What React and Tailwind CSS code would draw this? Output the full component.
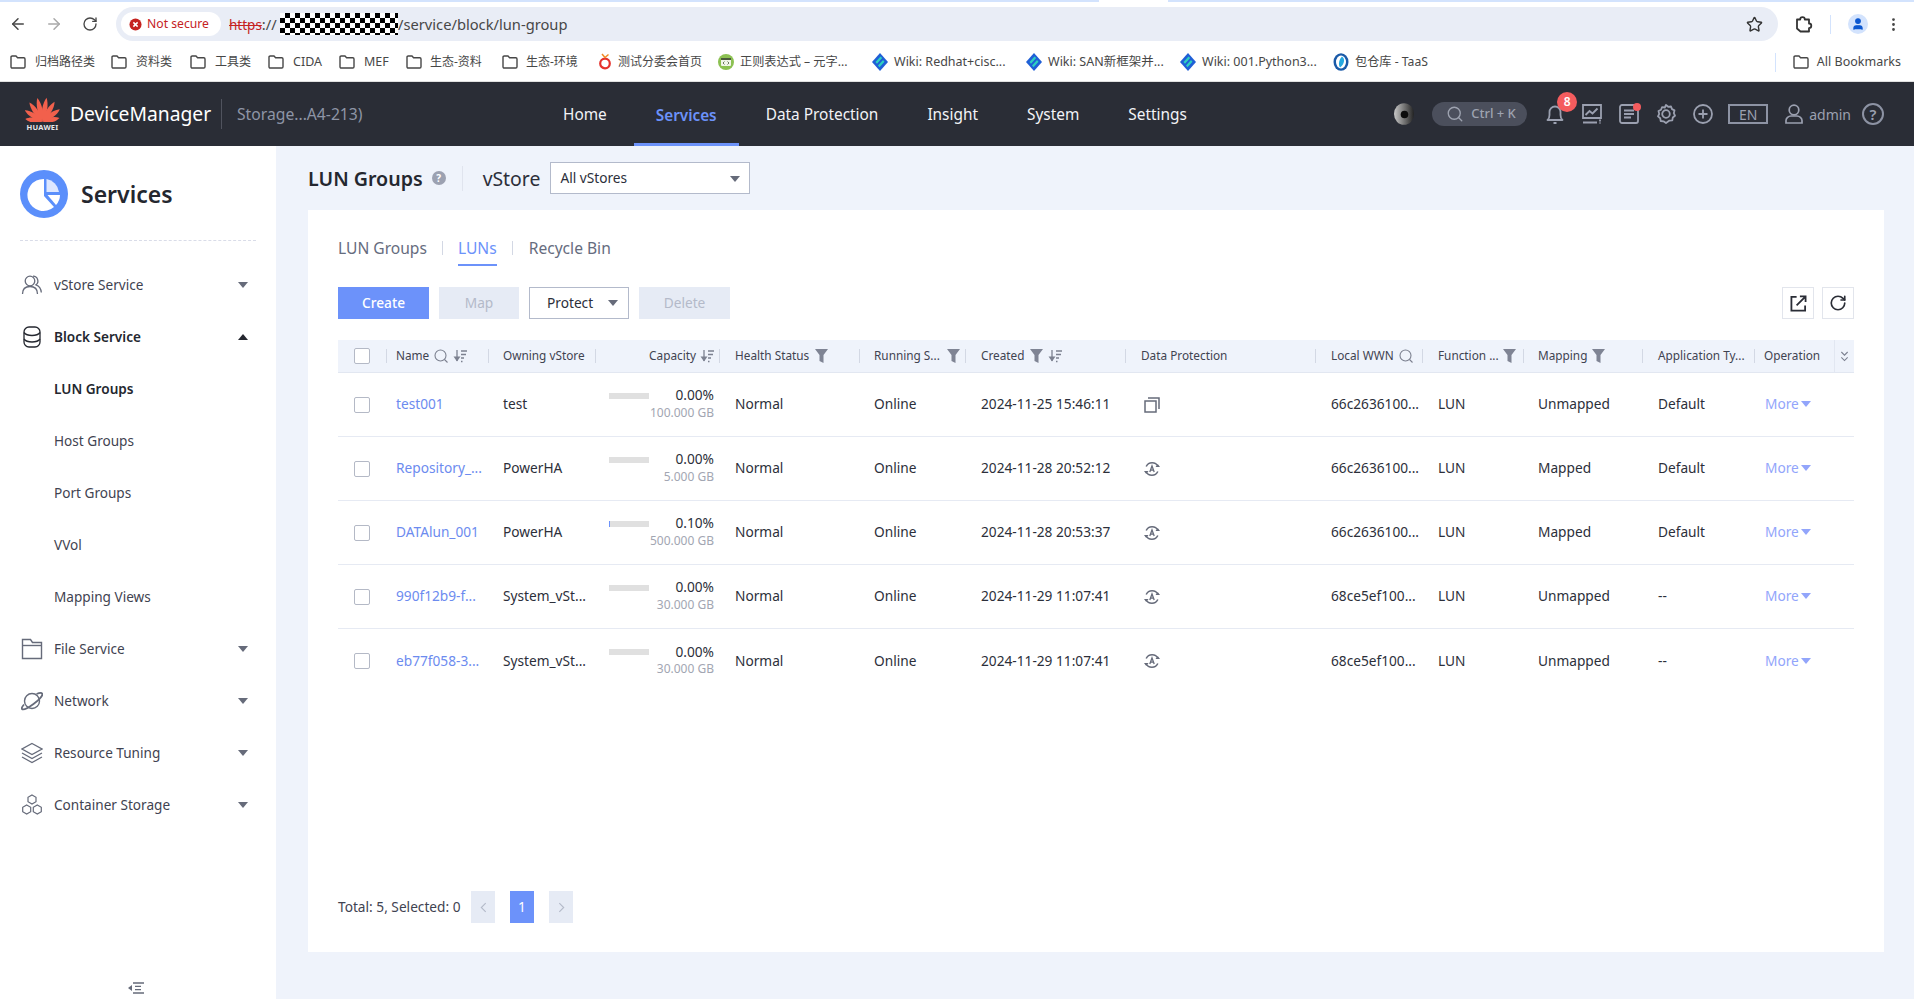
import React from "react";
import { ArrowLeft, ArrowRight, RotateCw, Star, User, EllipsisVertical, Search } from "lucide-react";

const GRID = "grid grid-cols-[48px_102px_107px_124px_140px_106px_160px_190px_107px_101px_119px_112px_80px_20px]";

function Caret({ up, className }) {
  return (
    <svg viewBox="0 0 10 6" className={className}>
      <polygon points={up ? "0,6 10,6 5,0" : "0,0 10,0 5,6"} fill="currentColor" />
    </svg>
  );
}

function Folder({ className = "w-4 h-[14px] text-[#474747]" }) {
  return (
    <svg viewBox="0 0 16 14" className={className} fill="none" stroke="currentColor" strokeWidth="1.4">
      <path d="M1 2.2C1 1.5 1.5 1 2.2 1H6l1.6 1.8h6.2c.7 0 1.2.5 1.2 1.2v7.8c0 .7-.5 1.2-1.2 1.2H2.2C1.5 13 1 12.500 1 11.800Z" />
    </svg>
  );
}

function RedIcon() {
  return (
    <svg viewBox="0 0 14 18" className="w-[14px] h-[18px]">
      <circle cx="7" cy="10.500" r="4.800" fill="none" stroke="#e5322d" strokeWidth="2.200" />
      <path d="M4 1l3 3.500L10.500 1.500" fill="none" stroke="#f08a24" strokeWidth="1.500" />
    </svg>
  );
}
function GreenIcon() {
  return (
    <svg viewBox="0 0 16 16" className="w-4 h-4">
      <circle cx="8" cy="8" r="8" fill="#8cc152" />
      <rect x="3" y="4" width="10" height="8" rx="1" fill="#f1f5ea" />
      <rect x="3" y="4" width="10" height="2" fill="#4b5a3c" />
      <path d="M6.500 7.500L5 9l1.500 1.500M9.500 7.500L11 9l-1.500 1.500" fill="none" stroke="#4b5a3c" strokeWidth=".8" />
    </svg>
  );
}
function WikiIcon() {
  return (
    <svg viewBox="0 0 16 18" className="w-4 h-[18px]">
      <path d="M8 0L16 9L8 18L0 9Z" fill="#1f5fd6" />
      <path d="M8.500 3.500L3.500 9l1.500 1.800L10.200 5ZM11 7L6 12.500l1.500 1.800L12.500 8.800Z" fill="#2fd0c0" />
    </svg>
  );
}
function TaasIcon() {
  return (
    <svg viewBox="0 0 16 18" className="w-4 h-[18px]">
      <ellipse cx="8" cy="9" rx="7.500" ry="8.800" fill="#1a5aa8" />
      <ellipse cx="8" cy="9" rx="5" ry="6.500" fill="#fff" />
      <path d="M9 3.500c3 2 3 7 -2 11c-2 -3 -1 -8 2 -11Z" fill="#25a9e0" />
    </svg>
  );
}

const bookmarks = [
  { w: "w-[101px] text-[12px]", gap: "gap-[9px]", icon: <Folder />, t: "归档路径类" },
  { w: "w-[79px] text-[12px]", gap: "gap-[9px]", icon: <Folder />, t: "资料类" },
  { w: "w-[78px] text-[12px]", gap: "gap-[9px]", icon: <Folder />, t: "工具类" },
  { w: "w-[71px]", gap: "gap-[9px]", icon: <Folder />, t: "CIDA" },
  { w: "w-[67px]", gap: "gap-[9px]", icon: <Folder />, t: "MEF" },
  { w: "w-[96px] text-[12px]", gap: "gap-[8px]", icon: <Folder />, t: "生态-资料" },
  { w: "w-[96px] text-[12px]", gap: "gap-[8px]", icon: <Folder />, t: "生态-环境" },
  { w: "w-[120px] text-[12px]", gap: "gap-[6px]", icon: <RedIcon />, t: "测试分委会首页" },
  { w: "w-[154px] text-[12.200px]", gap: "gap-[6px]", icon: <GreenIcon />, t: "正则表达式 – 元字..." },
  { w: "w-[154px]", gap: "gap-[6px]", icon: <WikiIcon />, t: "Wiki: Redhat+cisc..." },
  { w: "w-[154px]", gap: "gap-[6px]", icon: <WikiIcon />, t: "Wiki: SAN新框架并..." },
  { w: "w-[153px]", gap: "gap-[6px]", icon: <WikiIcon />, t: "Wiki: 001.Python3..." },
  { w: "w-[110px] text-[12.200px]", gap: "gap-[6px]", icon: <TaasIcon />, t: "包仓库 - TaaS" },
];

function BrowserChrome() {
  return (
    <div className="bg-white shrink-0">
      <div className="flex h-[2px]">
        <div className="w-[1099px] bg-[#d3e3fd]" />
        <div className="w-[69px] bg-white" />
        <div className="flex-1 bg-[#d3e3fd]" />
      </div>
      <div className="flex items-center pt-[5px] h-[39px]">
        <div className="w-9 flex justify-center"><ArrowLeft className="w-[18px] h-[18px] text-[#474747]" strokeWidth={2} /></div>
        <div className="w-9 flex justify-center"><ArrowRight className="w-[18px] h-[18px] text-[#a9a9a9]" strokeWidth={2} /></div>
        <div className="w-9 flex justify-center"><RotateCw className="w-4 h-4 text-[#474747]" strokeWidth={2} /></div>
        <div className="ml-2 flex-1 h-[34px] rounded-full bg-[#e9edf6] flex items-center pl-[5px] pr-[15px]">
          <div className="h-6 w-[100px] bg-white rounded-full flex items-center pl-[8px] gap-[5px] text-[12.200px] text-[#c5221f]">
            <svg viewBox="0 0 14 14" className="w-[13px] h-[13px] shrink-0">
              <circle cx="7" cy="7" r="6.500" fill="#c5221f" />
              <path d="M4.700 4.700l4.600 4.600M9.300 4.700l-4.600 4.600" stroke="#fff" strokeWidth="1.600" />
            </svg>
            <span className="leading-none">Not secure</span>
          </div>
          <div className="flex items-center ml-2 text-[14.700px] text-[#474747]">
            <span className="w-[51px] whitespace-nowrap">
              <span className="text-[13.500px] text-[#c5221f] line-through">https</span>://
            </span>
            <span className="inline-block w-[118px] h-[22px] bg-[repeating-conic-gradient(#000_0_25%,#fff_0_50%)] bg-[length:10px_10px]" />
            <span>/service/block/lun-group</span>
          </div>
          <Star className="ml-auto w-[17px] h-[17px] text-[#333]" strokeWidth={2} />
        </div>
        <div className="w-[136px] flex items-center pl-[17px]">
          <svg viewBox="0 0 18 18" className="w-[18px] h-[18px] text-[#333] shrink-0" fill="none" stroke="currentColor" strokeWidth="1.800">
            <path d="M2 4.500h3.200a2.300 2.300 0 0 1 4.600 0H14v4a2.300 2.300 0 0 1 0 4.600V16.500H5.500L2 13.500Z" strokeLinejoin="round" />
          </svg>
          <div className="ml-[17px] w-px h-[19px] bg-[#d3e3fd]" />
          <div className="ml-[17px] w-5 h-5 rounded-full bg-[#d3e3fd] flex items-center justify-center">
            <User className="w-[14px] h-[14px] text-[#0b57d0] fill-[#0b57d0]" />
          </div>
          <EllipsisVertical className="ml-[17px] w-[17px] h-[17px] text-[#474747]" strokeWidth={2} />
        </div>
      </div>
      <div className="h-[41px] flex items-center pl-[10px] pt-[2px] border-b border-[#e0e0e0] text-[12.500px] text-[#474747]">
        {bookmarks.map((b) => (
          <div key={b.t} className={`${b.w} ${b.gap} shrink-0 flex items-center whitespace-nowrap`}>
            <span className="shrink-0 flex">{b.icon}</span>
            <span>{b.t}</span>
          </div>
        ))}
        <div className="ml-auto flex items-center">
          <div className="w-px h-[19px] bg-[#d3e3fd] mr-[17px]" />
          <Folder />
          <span className="ml-2 mr-[13px] whitespace-nowrap">All Bookmarks</span>
        </div>
      </div>
    </div>
  );
}

function HuaweiLogo() {
  const petals = [
    [-11, 25], [11, 25], [-33, 24], [33, 24], [-56, 22], [56, 22], [-80, 18], [80, 18],
  ];
  return (
    <svg viewBox="0 0 36 27" className="w-[35px] h-[26px]">
      <defs>
        <linearGradient id="hw" gradientUnits="userSpaceOnUse" x1="18" y1="0" x2="18" y2="27">
          <stop offset="0" stopColor="#f2604c" />
          <stop offset=".4" stopColor="#e82a20" />
          <stop offset="1" stopColor="#9c0c10" />
        </linearGradient>
      </defs>
      {petals.map(([a, l]) => (
        <path
          key={a}
          transform={`translate(18 26.500) rotate(${a})`}
          d={`M0 0C-3.800 ${-l * 0.35} -3.600 ${-l * 0.75} -0.600 ${-l}C3 ${-l * 0.75} 3.400 ${-l * 0.35} 0 0Z`}
          fill="url(#hw)"
        />
      ))}
    </svg>
  );
}

const navs = ["Home", "Services", "Data Protection", "Insight", "System", "Settings"];

function TopBar() {
  const ic = "text-[#9ba0b0]";
  return (
    <div className="h-16 bg-[#2a2d36] flex items-center shrink-0 text-white">
      <div className="ml-[25px] flex flex-col items-center w-[35px]">
        <HuaweiLogo />
        <span className="text-[7.500px] font-bold leading-[9px] mt-[1px] text-[#e8e8ea] tracking-[0.2px]">HUAWEI</span>
      </div>
      <span className="ml-[10px] w-[141px] text-[19.300px] leading-none whitespace-nowrap">DeviceManager</span>
      <div className="ml-[10px] w-px h-[30px] bg-[#50535e]" />
      <span className="ml-[15px] w-[124px] pt-[2px] text-[15.700px] text-[#8e95a6] whitespace-nowrap">Storage...A4-213)</span>
      <div className="ml-[180px] flex h-full gap-[5px]">
        {navs.map((n) => (
          <div
            key={n}
            className={
              n === "Services"
                ? "px-[22px] h-full flex items-center text-[15.300px] font-semibold text-[#6c92fa] border-b-[3px] border-[#6c92fa] pt-[5px]"
                : "px-[22px] h-full flex items-center text-[15.400px] text-[#f2f3f6] whitespace-nowrap pt-[2px]"
            }
          >
            {n}
          </div>
        ))}
      </div>
      <div className="ml-auto flex items-center pr-[30px]">
        <svg viewBox="0 0 22 22" className="w-[22px] h-[22px]">
          <defs>
            <linearGradient id="eye" x1="0" y1="0" x2="1" y2="0">
              <stop offset="0" stopColor="#c8c8c8" />
              <stop offset=".6" stopColor="#666" />
              <stop offset="1" stopColor="#222" />
            </linearGradient>
          </defs>
          <ellipse cx="11" cy="11" rx="10" ry="10.800" fill="url(#eye)" />
          <circle cx="11.500" cy="11.500" r="3.800" fill="#0c0c0c" />
        </svg>
        <div className="ml-[17px] w-[95px] h-6 rounded-full bg-[#4b4f5c] flex items-center pl-[14px] gap-[7px] text-[13px] font-medium text-[#9ea3b0]">
          <Search className="w-[18px] h-[18px] text-[#9ea3b0]" strokeWidth={1.800} />
          <span className="whitespace-nowrap">Ctrl + K</span>
        </div>
        <div className="relative ml-[18px] w-5 h-5">
          <svg viewBox="0 0 20 20" className={`w-5 h-5 ${ic}`} fill="none" stroke="currentColor" strokeWidth="1.800">
            <path d="M2.500 16c1.500-1.200 2-3 2-5V8a5.500 5.500 0 0 1 11 0v3c0 2 .5 3.800 2 5Z" strokeLinejoin="round" />
            <path d="M8.500 19h3" strokeWidth="2" />
          </svg>
          <span className="absolute -top-3 left-3 w-5 h-5 rounded-full bg-[#f45c5e] text-white text-[12px] font-semibold flex items-center justify-center">8</span>
        </div>
        <svg viewBox="0 0 20 20" className={`ml-[17px] w-5 h-5 ${ic}`} fill="none" stroke="currentColor" strokeWidth="1.800">
          <path d="M1 1h18v13H1Z" />
          <path d="M3.500 11l4-4 3 2.500 5-5" />
          <path d="M1 18.500h14M18 15.500v2M18 18.500v1" />
        </svg>
        <div className="relative ml-[17px] w-5 h-5">
          <svg viewBox="0 0 20 20" className={`w-5 h-5 ${ic}`} fill="none" stroke="currentColor" strokeWidth="1.800">
            <rect x="1" y="1" width="18" height="18" rx="2" />
            <path d="M5 6.500h10M5 10h10M5 13.500h7" />
          </svg>
          <span className="absolute -top-[1px] -right-[2px] w-2 h-2 rounded-full bg-[#f45c5e]" />
        </div>
        <svg viewBox="0 0 20 20" className={`ml-[17px] w-5 h-5 ${ic}`} fill="none" stroke="currentColor" strokeWidth="1.800">
          <path d="M10 1l2.200 1.800 2.800-.3 1 2.600 2.500 1.300-.7 2.800 1.200 2.500-2.200 1.800-.5 2.800-2.800.3L10 19l-2.500-1.700-2.800-.3-.5-2.800L2 12.400l1.200-2.500-.7-2.800L5 5.800l1-2.600 2.800.3Z" strokeLinejoin="round" />
          <circle cx="10" cy="10" r="3.800" />
        </svg>
        <svg viewBox="0 0 20 20" className={`ml-[17px] w-5 h-5 ${ic}`} fill="none" stroke="currentColor" strokeWidth="1.800">
          <circle cx="10" cy="10" r="9" />
          <path d="M10 5.500v9M5.500 10h9" />
        </svg>
        <div className={`ml-[15px] w-10 h-5 border-2 border-[#8d93a4] flex items-center justify-center text-[14px] ${ic}`}>EN</div>
        <svg viewBox="0 0 20 20" className={`ml-4 w-5 h-5 ${ic}`} fill="none" stroke="currentColor" strokeWidth="1.700">
          <circle cx="10" cy="6" r="4.800" />
          <path d="M2 19v-2.500c0-2.500 2.500-4.500 5-4.500h6c2.500 0 5 2 5 4.500V19Z" />
        </svg>
        <span className={`ml-[5px] text-[14px] ${ic}`}>admin</span>
        <div className={`ml-[11px] w-[22px] h-[22px] rounded-full border-2 border-[#8d93a4] flex items-center justify-center text-[15px] font-semibold leading-none ${ic}`}>?</div>
      </div>
    </div>
  );
}

const iconCls = "w-[22px] h-[22px] text-[#666b7a] shrink-0";
const Ico = {
  users: (
    <svg viewBox="0 0 22 22" className={iconCls} fill="none" stroke="currentColor" strokeWidth="1.300">
      <circle cx="9" cy="7" r="4.800" />
      <path d="M1.500 20c0-5 3-7.500 7.500-7.500s7.500 2.500 7.500 7.500" />
      <path d="M12 2.200a4.800 4.800 0 0 1 3 8.600c3 1 5 3.800 5.300 7.700" />
    </svg>
  ),
  db: (
    <svg viewBox="0 0 22 22" className="w-[22px] h-[22px] text-[#24272f] shrink-0" fill="none" stroke="currentColor" strokeWidth="1.300">
      <rect x="3" y="1" width="16" height="20" rx="5" />
      <path d="M3 6.500c1.500 2 4.500 3 8 3s6.500-1 8-3M3 13c1.500 2 4.500 3 8 3s6.500-1 8-3" />
    </svg>
  ),
  file: (
    <svg viewBox="0 0 22 22" className={iconCls} fill="none" stroke="currentColor" strokeWidth="1.400">
      <path d="M1.500 1.500h8l2 3h9v16h-19Z" />
      <path d="M1.500 7.500h19" />
    </svg>
  ),
  net: (
    <svg viewBox="0 0 22 22" className={iconCls} fill="none" stroke="currentColor" strokeWidth="1.400">
      <circle cx="11" cy="11" r="7.500" />
      <path d="M15.500 4c3-1.200 5.300-1.200 5.800-.2C22 5.500 18 10 12.500 14S2.500 20.500 1 19c-.7-.8.2-2.500 2-4.500" strokeWidth="1.800" />
    </svg>
  ),
  layers: (
    <svg viewBox="0 0 22 22" className={iconCls} fill="none" stroke="currentColor" strokeWidth="1.300">
      <path d="M11 1.500L21 7l-10 5.500L1 7Z" />
      <path d="M1 11l10 5.500L21 11M1 15l10 5.500L21 15" />
    </svg>
  ),
  hex: (
    <svg viewBox="0 0 22 22" className={iconCls} fill="none" stroke="currentColor" strokeWidth="1.200">
      <path d="M11 1l4 2.300v4.400L11 10 7 7.700V3.300Z" />
      <path d="M5.700 11l4 2.300v4.400l-4 2.300-4-2.300v-4.400Z" />
      <path d="M16.300 11l4 2.300v4.400l-4 2.300-4-2.300v-4.400Z" />
    </svg>
  ),
};

function MenuRow({ icon, label, bold, open }) {
  return (
    <div className="h-[52px] flex items-center pl-[21px] pr-[28px]">
      {icon}
      <span className={`ml-[11px] text-[13.600px] ${bold ? "font-semibold text-[#24272f]" : "text-[#3f4351]"}`}>{label}</span>
      <Caret up={open} className={`ml-auto w-[10px] h-[6px] ${open ? "text-[#24272f]" : "text-[#666b7a]"}`} />
    </div>
  );
}
function SubRow({ label, bold }) {
  return (
    <div className={`h-[52px] flex items-center pl-[54px] text-[13.600px] ${bold ? "font-semibold text-[#24272f]" : "text-[#3f4351]"}`}>{label}</div>
  );
}

function Sidebar() {
  return (
    <aside className="w-[276px] shrink-0 bg-white flex flex-col relative">
      <div className="h-[95px] mx-5 border-b border-dashed border-[#d9dce8] flex items-start pt-[24px]">
        <svg viewBox="0 0 48 48" className="w-12 h-12 shrink-0">
          <circle cx="24" cy="24" r="24" fill="#5b8ffb" />
          <path d="M24 9A16 16 0 1 0 34 37L24 26Z" fill="#fff" />
          <path d="M26.500 9A15 15 0 0 1 39 22H26.500Z" fill="#dde7ff" />
          <path d="M27.500 25H40A15 15 0 0 1 36 35Z" fill="#fff" />
        </svg>
        <span className="ml-[13px] text-[23px] font-semibold text-[#24272f] leading-[48px]">Services</span>
      </div>
      <div className="mt-[18px]">
        <MenuRow icon={Ico.users} label="vStore Service" />
        <MenuRow icon={Ico.db} label="Block Service" bold open />
        <SubRow label="LUN Groups" bold />
        <SubRow label="Host Groups" />
        <SubRow label="Port Groups" />
        <SubRow label="VVol" />
        <SubRow label="Mapping Views" />
        <MenuRow icon={Ico.file} label="File Service" />
        <MenuRow icon={Ico.net} label="Network" />
        <MenuRow icon={Ico.layers} label="Resource Tuning" />
        <MenuRow icon={Ico.hex} label="Container Storage" />
      </div>
      <div className="mt-auto pb-[5px] pr-[4px] flex justify-center">
        <svg viewBox="0 0 16 12" className="w-4 h-3 text-[#666b7a]" fill="none" stroke="currentColor" strokeWidth="1.300">
          <polygon points="0,6 4,3 4,9" fill="currentColor" stroke="none" />
          <path d="M5 1h11M7 4.300h6M7 7.700h6M5 11h11" />
        </svg>
      </div>
    </aside>
  );
}

function Sep({ className = "mr-[15px]" }) {
  return <span className={`w-px h-[14px] bg-[#d3d8e4] shrink-0 ${className}`} />;
}
function SearchIco() {
  return (
    <svg viewBox="0 0 14 14" className="w-[14px] h-[14px] shrink-0 text-[#7c8190]" fill="none" stroke="currentColor" strokeWidth="1.100">
      <circle cx="6.500" cy="6.500" r="5.500" />
      <path d="M10.500 10.500l3 3" />
    </svg>
  );
}
function SortIco({ className = "" }) {
  return (
    <svg viewBox="0 0 14 14" className={`w-[14px] h-[14px] shrink-0 text-[#7c8190] ${className}`} fill="none" stroke="currentColor" strokeWidth="1.300">
      <path d="M4 1v11" />
      <path d="M0.500 7.500L4 12.500l3.500-5Z" fill="currentColor" stroke="none" />
      <path d="M8 2h6M8 5.500h5M8 9h3M8 12.500h1.500" />
    </svg>
  );
}
function FilterIco() {
  return (
    <svg viewBox="0 0 13 14" className="w-[13px] h-[14px] shrink-0 text-[#7f8494]">
      <polygon points="0,0 13,0 8.500,6 8.500,14 4.500,12 4.500,6" fill="currentColor" />
    </svg>
  );
}
function Checkbox() {
  return <span className="w-4 h-4 rounded-[2px] border border-[#b4b9c6] bg-white block" />;
}

function TableHead() {
  return (
    <div className={`${GRID} h-[33px] bg-[#eff3fb] border-b border-[#e2e7f1] text-[11.800px] text-[#3f4351] items-center`}>
      <div className="flex items-center pl-4 justify-between"><Checkbox /><span className="w-px" /></div>
      <div className="flex items-center"><Sep className="mr-[9px]" />Name<span className="ml-[5px]"><SearchIco /></span><SortIco className="ml-[5px]" /></div>
      <div className="flex items-center"><Sep className="mr-[14px]" />Owning vStore</div>
      <div className="flex items-center pr-[5px]"><Sep className="mr-0" /><span className="ml-auto">Capacity</span><SortIco className="ml-[4px]" /></div>
      <div className="flex items-center"><Sep />Health Status<span className="ml-[6px]"><FilterIco /></span></div>
      <div className="flex items-center"><Sep className="mr-[14px]" />Running S...<span className="ml-[7px]"><FilterIco /></span></div>
      <div className="flex items-center"><Sep />Created<span className="ml-[5px]"><FilterIco /></span><SortIco className="ml-[5px]" /></div>
      <div className="flex items-center"><Sep />Data Protection</div>
      <div className="flex items-center"><Sep />Local WWN<span className="ml-[5px]"><SearchIco /></span></div>
      <div className="flex items-center"><Sep />Function ...<span className="ml-[4px]"><FilterIco /></span></div>
      <div className="flex items-center"><Sep className="mr-[14px]" />Mapping<span className="ml-[5px]"><FilterIco /></span></div>
      <div className="flex items-center"><Sep />Application Ty...</div>
      <div className="flex items-center"><Sep className="mr-[9px]" />Operation</div>
      <div className="h-full border-l border-[#e2e7f1] flex items-center justify-center text-[#7c8190]">
        <svg viewBox="0 0 10 12" className="w-[9px] h-[11px]" fill="none" stroke="currentColor" strokeWidth="1.200">
          <path d="M1.500 1L5 4.500 8.500 1M1.500 7L5 10.500 8.500 7" />
        </svg>
      </div>
    </div>
  );
}

const rows = [
  { name: "test001", owner: "test", pct: "0.00%", cap: "100.000 GB", fill: 0, created: "2024-11-25 15:46:11", prot: "copy", wwn: "66c2636100...", map: "Unmapped", app: "Default" },
  { name: "Repository_...", owner: "PowerHA", pct: "0.00%", cap: "5.000 GB", fill: 0, created: "2024-11-28 20:52:12", prot: "auto", wwn: "66c2636100...", map: "Mapped", app: "Default" },
  { name: "DATAlun_001", owner: "PowerHA", pct: "0.10%", cap: "500.000 GB", fill: 1, created: "2024-11-28 20:53:37", prot: "auto", wwn: "66c2636100...", map: "Mapped", app: "Default" },
  { name: "990f12b9-f...", owner: "System_vSt...", pct: "0.00%", cap: "30.000 GB", fill: 0, created: "2024-11-29 11:07:41", prot: "auto", wwn: "68ce5ef100...", map: "Unmapped", app: "--" },
  { name: "eb77f058-3...", owner: "System_vSt...", pct: "0.00%", cap: "30.000 GB", fill: 0, created: "2024-11-29 11:07:41", prot: "auto", wwn: "68ce5ef100...", map: "Unmapped", app: "--" },
];

function ProtIcon({ type }) {
  if (type === "copy")
    return (
      <svg viewBox="0 0 16 16" className="w-4 h-4 text-[#666b7a]" fill="none" stroke="currentColor" strokeWidth="1.500">
        <rect x="1" y="4" width="11" height="11" />
        <path d="M4 1h11v11" />
      </svg>
    );
  return (
    <svg viewBox="0 0 16 16" className="w-4 h-4 text-[#666b7a]" fill="none" stroke="currentColor" strokeWidth="1.600">
      <path d="M2.200 5.500A6.500 6.500 0 0 1 14 5.500" />
      <path d="M13.800 10.500A6.500 6.500 0 0 1 2 10.500" />
      <path d="M0 10h4.500L2.200 13ZM16 6h-4.500L13.800 3Z" fill="currentColor" stroke="none" />
      <path d="M5.800 11L8 5l2.200 6M6.500 9.200h3" strokeWidth="1.300" />
    </svg>
  );
}

function Row({ r, last }) {
  return (
    <div className={`${GRID} h-16 items-center text-[13.700px] text-[#2c2f3a] ${last ? "" : "border-b border-[#e6eaf3]"}`}>
      <div className="pl-4"><Checkbox /></div>
      <div className="pl-[10px] text-[#6c8bef] whitespace-nowrap">{r.name}</div>
      <div className="pl-[15px] whitespace-nowrap">{r.owner}</div>
      <div className="pl-[14px] pr-[5px] -mt-[2px]">
        <div className="flex items-center justify-between h-[18px]">
          <div className="w-10 h-[6px] bg-[#e0e0e0]">
            {r.fill ? <div className="w-[1px] h-full bg-[#6c92fa]" /> : null}
          </div>
          <span>{r.pct}</span>
        </div>
        <div className="text-right text-[12px] leading-4 text-[#a2a6b2]">{r.cap}</div>
      </div>
      <div className="pl-4">Normal</div>
      <div className="pl-[15px]">Online</div>
      <div className="pl-4 whitespace-nowrap">{r.created}</div>
      <div className="pl-[19px]"><ProtIcon type={r.prot} /></div>
      <div className="pl-4 whitespace-nowrap">{r.wwn}</div>
      <div className="pl-4">LUN</div>
      <div className="pl-[15px]">{r.map}</div>
      <div className="pl-4">{r.app}</div>
      <div className="pl-[11px] flex items-center gap-[2px] text-[#92a5fb]">
        More<Caret className="w-[10px] h-[6px]" />
      </div>
      <div />
    </div>
  );
}

function Btn({ children, className }) {
  return <div className={`h-8 flex items-center justify-center text-[13.700px] ${className}`}>{children}</div>;
}

function Main() {
  return (
    <main className="flex-1 min-w-0 bg-[#eff3fb] pl-8 pr-[30px] pt-4 pb-[47px] flex flex-col">
      <div className="h-8 flex items-center shrink-0">
        <span className="pt-[1px] text-[19.600px] font-semibold text-[#24272f]">LUN Groups</span>
        <span className="ml-[9px] w-[14px] h-[14px] rounded-full bg-[#9ca1b1] text-white text-[10px] font-bold flex items-center justify-center">?</span>
        <span className="ml-4 w-px h-[25px] bg-[#e0e4ee]" />
        <span className="pt-[1px] ml-5 text-[19.400px] text-[#2c2f3a]">vStore</span>
        <div className="ml-[10px] w-[200px] h-8 bg-white border border-[#b3bacb] flex items-center pt-[1px] pl-[9px] pr-[8px] text-[13.700px] text-[#2c2f3a]">
          All vStores
          <Caret className="ml-auto w-[10px] h-[6px] text-[#666b7a] mr-[1px]" />
        </div>
      </div>
      <section className="mt-4 flex-1 bg-white pt-[26px] pb-[29px] px-[30px] flex flex-col">
        <div className="flex items-start h-[30px] text-[15.600px] text-[#666c7e]">
          <span className="leading-6">LUN Groups</span>
          <span className="ml-[15px] mt-[5px] w-px h-[14px] bg-[#d3d8e4]" />
          <span className="ml-[15px] leading-6 h-[30px] text-[#6c92fa] border-b-2 border-[#6c92fa]">LUNs</span>
          <span className="ml-[15px] mt-[5px] w-px h-[14px] bg-[#d3d8e4]" />
          <span className="ml-4 leading-6">Recycle Bin</span>
        </div>
        <div className="mt-[21px] flex items-center">
          <Btn className="w-[91px] bg-[#6c92fa] text-white font-medium">Create</Btn>
          <Btn className="ml-[10px] w-[80px] bg-[#e6ebf5] text-[#b4bac9]">Map</Btn>
          <Btn className="ml-[10px] w-[100px] bg-white border border-[#b3bacb] text-[#2c2f3a] pl-[17px] pr-[10px]">
            Protect<Caret className="ml-auto w-[10px] h-[6px] text-[#666b7a]" />
          </Btn>
          <Btn className="ml-[10px] w-[91px] bg-[#e6ebf5] text-[#b4bac9]">Delete</Btn>
          <div className="ml-auto w-8 h-8 border border-[#e2e5ec] flex items-center justify-center">
            <svg viewBox="0 0 18 18" className="w-[17px] h-[17px] text-[#2a2d36]" fill="none" stroke="currentColor" strokeWidth="1.900">
              <path d="M7 2H1.500v14.500h14.500V11" />
              <path d="M7 11L15.500 2.500M10.500 1.500h6v6" />
            </svg>
          </div>
          <div className="ml-2 w-8 h-8 border border-[#e2e5ec] flex items-center justify-center">
            <RotateCw className="w-[18px] h-[18px] text-[#2a2d36]" strokeWidth={2.200} />
          </div>
        </div>
        <div className="mt-[21px]">
          <TableHead />
          {rows.map((r, i) => <Row key={r.created + r.name} r={r} last={i === rows.length - 1} />)}
        </div>
        <div className="mt-auto flex items-center h-8 text-[13.700px] text-[#3f4351]">
          <span className="w-[123px] whitespace-nowrap">Total: 5, Selected: 0</span>
          <div className="ml-[10px] w-6 h-8 bg-[#e6ebf5] text-[#b4bac9] flex items-center justify-center">
            <svg viewBox="0 0 8 12" className="w-[7px] h-[11px]" fill="none" stroke="currentColor" strokeWidth="1.300"><path d="M6.500 1L1.500 6l5 5" /></svg>
          </div>
          <div className="ml-[15px] w-6 h-8 bg-[#6c92fa] text-white flex items-center justify-center">1</div>
          <div className="ml-[15px] w-6 h-8 bg-[#e6ebf5] text-[#b4bac9] flex items-center justify-center">
            <svg viewBox="0 0 8 12" className="w-[7px] h-[11px]" fill="none" stroke="currentColor" strokeWidth="1.300"><path d="M1.500 1l5 5-5 5" /></svg>
          </div>
        </div>
      </section>
    </main>
  );
}

export default function App() {
  return (
    <div className="w-[1914px] h-[999px] overflow-hidden flex flex-col font-['Noto_Sans','Noto_Sans_CJK_SC',sans-serif] bg-white">
      <BrowserChrome />
      <TopBar />
      <div className="flex flex-1 min-h-0">
        <Sidebar />
        <Main />
      </div>
    </div>
  );
}
